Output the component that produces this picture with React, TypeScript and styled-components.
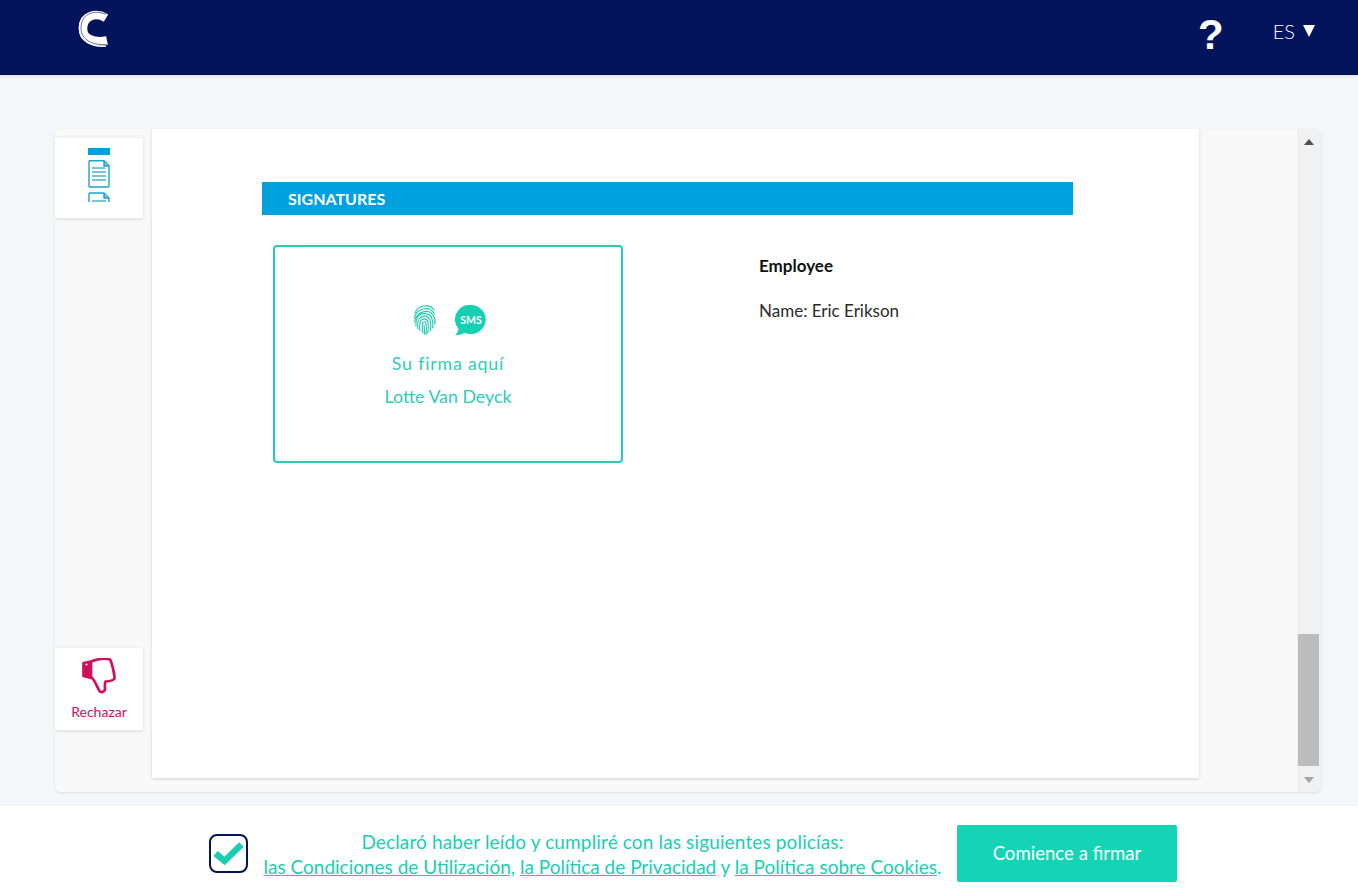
import React from "react";
import styled, { createGlobalStyle } from "styled-components";

const Global = createGlobalStyle`
  html, body { margin: 0; padding: 0; height: 100%; }
  body { font-family: Lato, "Noto Sans", sans-serif; background: #f5f6fa; }
  #root { height: 896px; }
  * { box-sizing: border-box; }
`;

const Page = styled.div`
  height: 896px;
  display: flex;
  flex-direction: column;
  overflow: hidden;
`;
const Header = styled.header`
  height: 75px;
  flex: none;
  background: #04145c;
  display: flex;
  align-items: center;
  padding: 0 43px 8px 78px;
  box-shadow: 0 1px 4px rgba(10, 20, 80, 0.12);
`;
const LogoSlot = styled.div`
  display: flex;
  margin-bottom: 9px;
`;
const Spacer = styled.div`
  flex: 1;
`;
const Help = styled.span`
  font-family: "Liberation Sans", sans-serif;
  font-weight: 700;
  font-size: 42px;
  line-height: 43px;
  color: #fff;
  margin: 2px 49px 0 0;
`;
const Lang = styled.span`
  font-size: 20px;
  font-weight: 300;
  color: #fff;
  display: flex;
  align-items: center;
  gap: 8px;
  margin-bottom: 6px;
`;
const Caret = styled.span`
  width: 0;
  height: 0;
  border-left: 6px solid transparent;
  border-right: 6px solid transparent;
  border-top: 12px solid #fff;
  margin-top: 1px;
`;
const Main = styled.main`
  flex: 1;
  display: flex;
  padding: 54px 37px 14px 55px;
  min-height: 0;
`;
const Panel = styled.section`
  flex: 1;
  display: flex;
  background: #f9f9f9;
  border-radius: 6px;
  box-shadow: 0 1px 3px rgba(0, 0, 0, 0.1);
  overflow: hidden;
`;
const Sidebar = styled.aside`
  width: 97px;
  flex: none;
  display: flex;
  flex-direction: column;
  justify-content: space-between;
  padding: 9px 0 62px;
`;
const SideCard = styled.div<{ $h: number }>`
  width: 88px;
  height: ${(p) => p.$h}px;
  background: #fff;
  box-shadow: 0 1px 4px rgba(0, 0, 0, 0.14);
  display: flex;
  flex-direction: column;
  align-items: center;
`;
const Thumbs = styled.div`
  padding-top: 10px;
  overflow: hidden;
`;
const RejectLabel = styled.span`
  font-size: 14px;
  color: #d0105c;
  margin-top: 6px;
`;
const DocWrap = styled.div`
  width: 1145px;
  flex: none;
  padding-bottom: 14px;
  display: flex;
`;
const Doc = styled.div`
  width: 1047px;
  background: #fff;
  box-shadow: 0 1px 3px rgba(0, 0, 0, 0.16);
  padding: 53px 126px 0 110px;
`;
const Band = styled.h2`
  margin: 0;
  height: 33px;
  background: #00a1de;
  color: #fff;
  font-size: 16px;
  font-weight: 700;
  line-height: 34px;
  padding-left: 26px;
`;
const SigRow = styled.div`
  display: flex;
  margin-top: 30px;
  padding-left: 11px;
`;
const SigBox = styled.div`
  width: 350px;
  height: 218px;
  border: 2px solid #27cdb6;
  border-radius: 4px;
  display: flex;
  flex-direction: column;
  align-items: center;
  padding-top: 57px;
  color: #2ecdb6;
  font-size: 17.8px;
`;
const SigIcons = styled.div`
  display: flex;
  align-items: center;
  gap: 17px;
  height: 32px;
  margin: 0 0 11px 3px;
`;
const SigLine = styled.div<{ $wide?: boolean }>`
  line-height: 33px;
  letter-spacing: ${(p) => (p.$wide ? "0.8px" : "0")};
`;
const Info = styled.div`
  margin-left: 136px;
  padding-top: 9px;
  font-size: 17px;
  color: #2b2b2b;
`;
const Bold = styled.div`
  font-weight: 700;
  color: #111;
  line-height: 24px;
  margin-bottom: 21px;
`;
const Name = styled.div`
  line-height: 24px;
`;
const Scroll = styled.div`
  width: 24px;
  flex: none;
  background: #f1f1f1;
  display: flex;
  flex-direction: column;
  align-items: center;
  padding: 0 2px 0 1px;
`;
const Arrow = styled.div<{ $up?: boolean }>`
  width: 0;
  height: 0;
  border-left: 5px solid transparent;
  border-right: 5px solid transparent;
  ${(p) =>
    p.$up
      ? "border-bottom: 6px solid #505050; margin-top: 10px;"
      : "border-top: 6px solid #a3a3a3; margin: 11px 0 9px;"}
`;
const ThumbBar = styled.div`
  width: 100%;
  height: 132px;
  background: #bcbcbc;
`;
const Footer = styled.footer`
  height: 90px;
  flex: none;
  background: #fff;
  display: flex;
  align-items: flex-start;
  padding: 19px 0 0 209px;
`;
const CheckBox = styled.div`
  width: 39px;
  height: 39px;
  margin-top: 9px;
  border: 2px solid #04145c;
  border-radius: 8px;
  display: flex;
  align-items: center;
  justify-content: center;
`;
const Terms = styled.div`
  width: 679px;
  margin: 4px 0 0 15px;
  text-align: center;
  font-size: 19px;
  line-height: 25px;
  color: #19ceb2;
  white-space: nowrap;
`;
const TermLine = styled.span`
  letter-spacing: 0.14px;
`;
const TermLink = styled.a`
  color: #19ceb2;
  text-decoration: underline;
`;
const Start = styled.button`
  width: 220px;
  height: 57px;
  margin-left: 15px;
  padding: 0 0 2px;
  background: #15d4b5;
  border: 0;
  border-radius: 2px;
  color: #fff;
  font-family: inherit;
  font-size: 18.6px;
`;

const Logo = () => (
  <svg width="30" height="38" viewBox="0 0 30 38" fill="none">
    <path d="M28 6.500C18 0 1.500 2 1.500 18c0 14 13 19 26.500 18" stroke="#fff" strokeWidth="1.500" />
    <path d="M28 8C19 2.500 5.500 4.500 5 18c-.5 10 10 15.500 24 12.500" stroke="#fff" strokeWidth="8.500" />
    <path d="M28 4.500C18-.5 3 2.500 3 18c0 12 12 17.500 25.500 16.500" stroke="#04145c" strokeWidth="0.600" />
  </svg>
);
const DocIcon = () => (
  <svg width="24" height="54" viewBox="0 0 24 54" fill="none" stroke="#1ea3cc" strokeWidth="1.400">
    <rect x="1" y="0" width="22" height="7" fill="#00a1de" stroke="none" />
    <path d="M2 12.700h15l5 5V38a1 1 0 0 1-1 1H3a1 1 0 0 1-1-1V13.700a1 1 0 0 1 1-1z" />
    <path d="M17 13v5h5" fill="#6cc5e4" />
    <path d="M5 20h13M5 24h14M5 28h14M5 32h14" stroke="#4fb3c8" />
    <path d="M2 54V46a1 1 0 0 1 1-1h14l5 5v4" />
    <path d="M17 45v5h5" fill="#6cc5e4" />
    <path d="M5 53h14" stroke="#4fb3c8" />
  </svg>
);
const ThumbIcon = () => (
  <svg width="34" height="36" viewBox="0 0 34 36" fill="none" stroke="#d0105c" strokeWidth="2.700" strokeLinejoin="round">
    <path d="M1.500 5l7.500-1.500V20l-7.500-2z" fill="#d0105c" />
    <path d="M9 3.500C15 1 22 0 28 1.500c1.500 2 4.500 14 4.500 19-1.500 3-6 2.500-9 3-1 2-.5 6-.5 8-1 3-4.500 3.500-5.500 1.500C15 29 13 22 9 19" />
    <circle cx="4.500" cy="6.500" r="1" fill="#fff" stroke="none" />
  </svg>
);
const FingerIcon = () => (
  <svg width="24" height="32" viewBox="0 0 24 32" fill="none" stroke="#1fc9b0" strokeWidth="1.100" strokeLinecap="round">
    <path d="M2 9C5 1 17-.5 21 6" />
    <path d="M1.500 14C3 5 16 .5 21.500 10" />
    <path d="M1.500 18C3 8 15 4 20 11c2 3 2.500 6 2 9" />
    <path d="M3 22c0-2-.5-5 1-8 3-6 13-6 15 1 1 3 1.500 6 .5 9" />
    <path d="M5 25c-.5-3-.5-7 1-10 3-4 9-4 11 1 1 4 1 8 0 11" />
    <path d="M7 27c-.5-3-.5-7 .5-10 2-3 6-3 7.500 1 .5 4 .5 8-.5 11" />
    <path d="M10 29c-.5-3-1-7-.5-10 1-2 3-2 3.500 0 .5 4 .5 8 0 12" />
    <path d="M11 21c.5 3 .5 6 .5 9" />
  </svg>
);
const SmsIcon = () => (
  <svg width="32" height="31" viewBox="0 0 32 31">
    <path d="M16.500 0a15 14.500 0 1 1-6 27.700C8 29.500 4 30.500 1 30c2-1.500 3-3.500 3.500-6A14.500 14.500 0 0 1 16.500 0z" fill="#15d0b2" />
    <text x="17" y="19" textAnchor="middle" fontFamily="Lato, sans-serif" fontSize="10.500" fontWeight="700" fill="#fff">SMS</text>
  </svg>
);
const CheckIcon = () => (
  <svg width="31" height="25" viewBox="0 0 31 25" fill="none">
    <path d="M2.500 12.500l9 7.500L28.500 3.500" stroke="#19ceb2" strokeWidth="6.500" />
  </svg>
);

export default function App() {
  return (
    <Page>
      <Global />
      <Header>
        <LogoSlot>
          <Logo />
        </LogoSlot>
        <Spacer />
        <Help>?</Help>
        <Lang>
          ES
          <Caret />
        </Lang>
      </Header>
      <Main>
        <Panel>
          <Sidebar>
            <SideCard $h={80}>
              <Thumbs>
                <DocIcon />
              </Thumbs>
            </SideCard>
            <SideCard $h={82}>
              <Thumbs>
                <ThumbIcon />
              </Thumbs>
              <RejectLabel>Rechazar</RejectLabel>
            </SideCard>
          </Sidebar>
          <DocWrap>
            <Doc>
              <Band>SIGNATURES</Band>
              <SigRow>
                <SigBox>
                  <SigIcons>
                    <FingerIcon />
                    <SmsIcon />
                  </SigIcons>
                  <SigLine $wide>Su firma aquí</SigLine>
                  <SigLine>Lotte Van Deyck</SigLine>
                </SigBox>
                <Info>
                  <Bold>Employee</Bold>
                  <Name>Name: Eric Erikson</Name>
                </Info>
              </SigRow>
            </Doc>
          </DocWrap>
          <Scroll>
            <Arrow $up />
            <Spacer />
            <ThumbBar />
            <Arrow />
          </Scroll>
        </Panel>
      </Main>
      <Footer>
        <CheckBox>
          <CheckIcon />
        </CheckBox>
        <Terms>
          <TermLine>Declaró haber leído y cumpliré con las siguientes policías:</TermLine>
          <br />
          <TermLink>las Condiciones de Utilización,</TermLink> <TermLink>la Política de Privacidad</TermLink> y{" "}
          <TermLink>la Política sobre Cookies</TermLink>.
        </Terms>
        <Start>Comience a firmar</Start>
      </Footer>
    </Page>
  );
}
